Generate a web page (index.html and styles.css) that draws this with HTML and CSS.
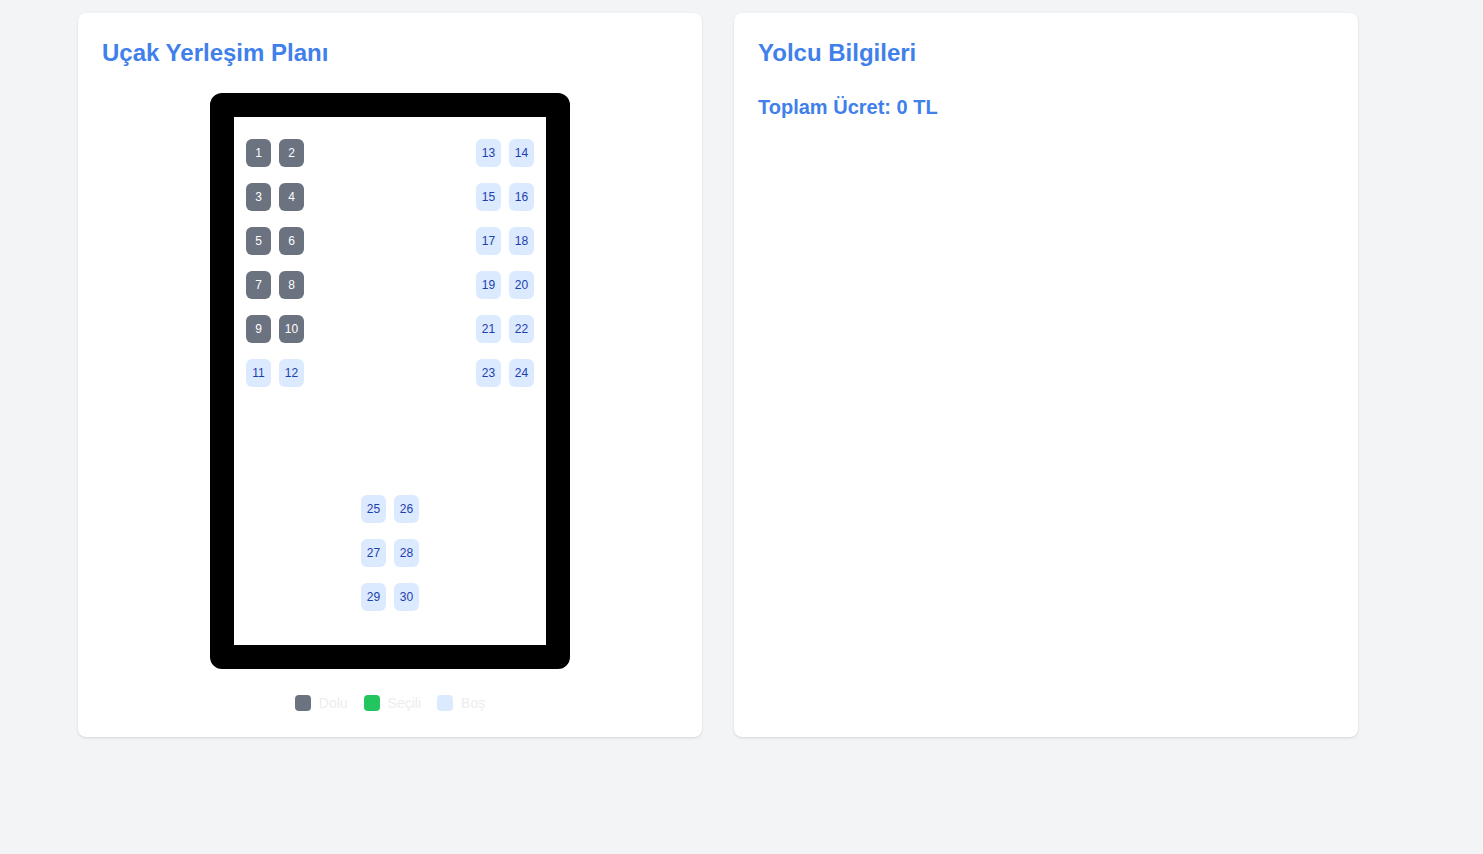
FILE: index.html
```html
<!DOCTYPE html>
<html lang="tr">
<head>
<meta charset="utf-8">
<meta name="viewport" content="width=device-width, initial-scale=1">
<title>Uçak Yerleşim Planı</title>
<link rel="stylesheet" href="styles.css">
</head>
<body>
<main class="container">
  <section class="card">
    <h1 class="title">Uçak Yerleşim Planı</h1>
    <div class="cabin">
      <div class="cabin-front">
        <div class="seats">
          <button class="seat taken" type="button">1</button>
          <button class="seat taken" type="button">2</button>
          <button class="seat taken" type="button">3</button>
          <button class="seat taken" type="button">4</button>
          <button class="seat taken" type="button">5</button>
          <button class="seat taken" type="button">6</button>
          <button class="seat taken" type="button">7</button>
          <button class="seat taken" type="button">8</button>
          <button class="seat taken" type="button">9</button>
          <button class="seat taken" type="button">10</button>
          <button class="seat" type="button">11</button>
          <button class="seat" type="button">12</button>
        </div>
        <div class="seats">
          <button class="seat" type="button">13</button>
          <button class="seat" type="button">14</button>
          <button class="seat" type="button">15</button>
          <button class="seat" type="button">16</button>
          <button class="seat" type="button">17</button>
          <button class="seat" type="button">18</button>
          <button class="seat" type="button">19</button>
          <button class="seat" type="button">20</button>
          <button class="seat" type="button">21</button>
          <button class="seat" type="button">22</button>
          <button class="seat" type="button">23</button>
          <button class="seat" type="button">24</button>
        </div>
      </div>
      <div class="seats">
        <button class="seat" type="button">25</button>
        <button class="seat" type="button">26</button>
        <button class="seat" type="button">27</button>
        <button class="seat" type="button">28</button>
        <button class="seat" type="button">29</button>
        <button class="seat" type="button">30</button>
      </div>
    </div>
    <ul class="legend">
      <li class="legend-item"><span class="swatch taken"></span>Dolu</li>
      <li class="legend-item"><span class="swatch selected"></span>Seçili</li>
      <li class="legend-item"><span class="swatch"></span>Boş</li>
    </ul>
  </section>
  <section class="card">
    <h2 class="title">Yolcu Bilgileri</h2>
    <p class="total">Toplam Ücret: 0 TL</p>
  </section>
</main>
</body>
</html>
```

FILE: styles.css
```css
* {
  box-sizing: border-box;
  margin: 0;
}

body {
  min-height: 100vh;
  padding: 13px 47px 13px 0;
  background: #f3f4f6;
  font-family: "Liberation Sans", Arial, sans-serif;
}

.container {
  display: grid;
  grid-template-columns: repeat(2, minmax(0, 1fr));
  gap: 32px;
  max-width: 1280px;
  margin: 0 auto;
}

.card {
  padding: 24px;
  border-radius: 8px;
  background: #fff;
  box-shadow: 0 1px 3px rgb(0 0 0 / 10%), 0 1px 2px -1px rgb(0 0 0 / 10%);
}

.title {
  margin-bottom: 24px;
  color: #3f80ea;
  font-size: 24px;
  line-height: 32px;
}

.total {
  color: #3f80ea;
  font-size: 20px;
  font-weight: 700;
  line-height: 28px;
}

.cabin {
  display: flex;
  flex-direction: column;
  align-items: center;
  gap: 108px;
  max-width: 360px;
  margin: 0 auto 24px;
  padding: 22px 12px 34px;
  border: 24px solid #000;
  border-radius: 12px;
}

.cabin-front {
  display: flex;
  justify-content: space-between;
  width: 100%;
}

.seats {
  display: grid;
  grid-template-columns: repeat(2, 25px);
  gap: 16px 8px;
}

.seat {
  padding: 6px 0;
  border: 0;
  border-radius: 6px;
  background: #dbeafe;
  color: #1e40af;
  font: 12px/16px "Liberation Sans", Arial, sans-serif;
  text-align: center;
  cursor: pointer;
}

.seat.taken {
  background: #6b7280;
  color: #fff;
  cursor: not-allowed;
}

.legend {
  display: flex;
  justify-content: center;
  gap: 16px;
  padding: 0;
  color: #ededed;
  font-size: 14px;
  line-height: 20px;
  list-style: none;
}

.legend-item {
  display: flex;
  align-items: center;
  gap: 8px;
}

.swatch {
  width: 16px;
  height: 16px;
  border-radius: 4px;
  background: #dbeafe;
}

.swatch.taken {
  background: #6b7280;
}

.swatch.selected {
  background: #22c55e;
}
```
